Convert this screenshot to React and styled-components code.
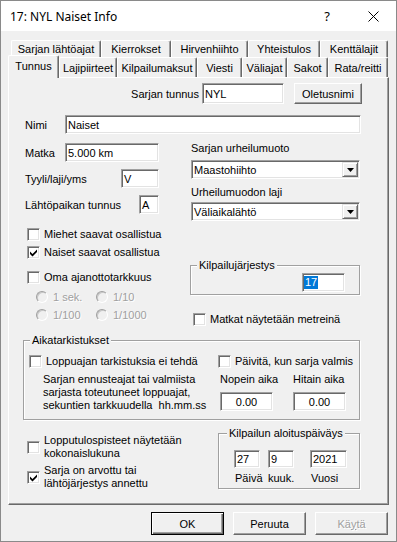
import React from "react";
import styled, { createGlobalStyle, css } from "styled-components";

const GlobalStyle = createGlobalStyle`
  html, body {
    margin: 0;
    padding: 0;
    background: #f0f0f0;
  }
  body {
    font-family: "Liberation Sans", Arial, sans-serif;
    font-size: 11px;
    color: #000;
  }
  * {
    box-sizing: border-box;
  }
`;

const backTabs = [
  { label: "Sarjan lähtöajat", w: 90 },
  { label: "Kierrokset", w: 70 },
  { label: "Hirvenhiihto", w: 77 },
  { label: "Yhteistulos", w: 72 },
  { label: "Kenttälajit", w: 68 },
];

const frontTabs = [
  { label: "Tunnus", w: 51, active: true },
  { label: "Lajipiirteet", w: 58 },
  { label: "Kilpailumaksut", w: 80 },
  { label: "Viesti", w: 45 },
  { label: "Väliajat", w: 45 },
  { label: "Sakot", w: 41 },
  { label: "Rata/reitti", w: 60 },
];

function CheckMark() {
  return (
    <svg width="7" height="8" viewBox="0 0 7 8">
      <polygon points="0,2.4 2.5,4.9 7,0.4 7,3 2.5,7.5 0,5" fill="#000" />
    </svg>
  );
}

function Check({ checked, children, multi }) {
  return (
    <CheckLine $multi={multi}>
      <Box>{checked && <CheckMark />}</Box>
      <span>{children}</span>
    </CheckLine>
  );
}

function Radio({ children }) {
  return (
    <RadioLine>
      <Circle />
      <span>{children}</span>
    </RadioLine>
  );
}

function Dropdown({ value }) {
  return (
    <Select $w={169}>
      <span>{value}</span>
      <DropButton>
        <svg width="7" height="4" viewBox="0 0 7 4">
          <polygon points="0,0 7,0 3.5,4" fill="#000" />
        </svg>
      </DropButton>
    </Select>
  );
}

export default function App() {
  return (
    <>
      <GlobalStyle />
      <Window>
        <TitleBar>
          <Title>17: NYL Naiset Info</Title>
          <CaptionButton>
            <HelpGlyph>?</HelpGlyph>
          </CaptionButton>
          <CaptionButton>
            <svg width="11" height="11" viewBox="0 0 11 11">
              <path d="M0.5 0.5 L10.5 10.5 M10.5 0.5 L0.5 10.5" stroke="#000" strokeWidth="1" />
            </svg>
          </CaptionButton>
        </TitleBar>

        <Body>
          <BackRow>
            {backTabs.map((t) => (
              <BackTab key={t.label} $w={t.w}>
                {t.label}
              </BackTab>
            ))}
          </BackRow>
          <FrontRow>
            {frontTabs.map((t) => (
              <FrontTab key={t.label} $w={t.w} $active={t.active}>
                {t.label}
              </FrontTab>
            ))}
          </FrontRow>

          <Panel>
            <TopRow>
              <Label>Sarjan tunnus</Label>
              <Field $w={82} $h={21}>NYL</Field>
              <Button $w={68} $h={21}>Oletusnimi</Button>
            </TopRow>

            <NameRow>
              <Label $w={40}>Nimi</Label>
              <Field $w={296}>Naiset</Field>
            </NameRow>

            <Columns>
              <LeftCol>
                <FormRow $top={1}>
                  <Label $w={40}>Matka</Label>
                  <Field $w={94}>5.000 km</Field>
                </FormRow>
                <FormRow $top={7}>
                  <Label $grow>Tyyli/laji/yms</Label>
                  <Field $w={38}>V</Field>
                </FormRow>
                <FormRow $top={7}>
                  <Label $grow>Lähtöpaikan tunnus</Label>
                  <Field $w={20}>A</Field>
                </FormRow>
                <CheckStack $top={11}>
                  <Check>Miehet saavat osallistua</Check>
                  <Check checked>Naiset saavat osallistua</Check>
                </CheckStack>
                <CheckStack $top={7}>
                  <Check>Oma ajanottotarkkuus</Check>
                </CheckStack>
                <RadioGrid>
                  <Radio>1 sek.</Radio>
                  <Radio>1/10</Radio>
                  <Radio>1/100</Radio>
                  <Radio>1/1000</Radio>
                </RadioGrid>
              </LeftCol>

              <RightCol>
                <Caption>Sarjan urheilumuoto</Caption>
                <Spaced $top={5}>
                  <Dropdown value="Maastohiihto" />
                </Spaced>
                <Spaced $top={7}>
                  <Caption>Urheilumuodon laji</Caption>
                </Spaced>
                <Spaced $top={3}>
                  <Dropdown value="Väliaikalähtö" />
                </Spaced>
                <OrderGroup $w={170} $h={30}>
                  <Legend>Kilpailujärjestys</Legend>
                  <OrderRow>
                    <Field $w={43}>
                      <Selected>17</Selected>
                    </Field>
                  </OrderRow>
                </OrderGroup>
                <CheckStack $top={15}>
                  <Check>Matkat näytetään metreinä</Check>
                </CheckStack>
              </RightCol>
            </Columns>

            <TimeGroup $w={337} $h={80}>
              <Legend>Aikatarkistukset</Legend>
              <TimeGrid>
                <Indent $left={5}>
                  <Check>Loppuajan tarkistuksia ei tehdä</Check>
                </Indent>
                <Check>Päivitä, kun sarja valmis</Check>
                <Note>
                  Sarjan ennusteajat tai valmiista
                  <br />
                  sarjasta toteutuneet loppuajat,
                  <br />
                  {"sekuntien tarkkuudella\u00a0 hh.mm.ss"}
                </Note>
                <Limits>
                  <LimitCol>
                    <Caption>Nopein aika</Caption>
                    <LimitField $w={53} $center>0.00</LimitField>
                  </LimitCol>
                  <LimitCol>
                    <Caption>Hitain aika</Caption>
                    <LimitField $w={53} $center>0.00</LimitField>
                  </LimitCol>
                </Limits>
              </TimeGrid>
            </TimeGroup>

            <BottomArea>
              <BottomChecks>
                <Check multi>
                  Lopputulospisteet näytetään
                  <br />
                  kokonaislukuna
                </Check>
                <Check multi checked>
                  Sarja on arvottu tai
                  <br />
                  lähtöjärjestys annettu
                </Check>
              </BottomChecks>
              <Group $w={142} $h={56}>
                <Legend $left={8}>Kilpailun aloituspäiväys</Legend>
                <DateGrid>
                  <Field $w={26} $h={18}>27</Field>
                  <Field $w={26} $h={18}>9</Field>
                  <Field $w={37} $h={18}>2021</Field>
                  <DateLabel $left={1}>Päivä</DateLabel>
                  <DateLabel>kuuk.</DateLabel>
                  <DateLabel $left={1}>Vuosi</DateLabel>
                </DateGrid>
              </Group>
            </BottomArea>
          </Panel>

          <ButtonRow>
            <Button $w={73} $h={23} $default>OK</Button>
            <Button $w={73} $h={23}>Peruuta</Button>
            <Button $w={73} $h={23} $disabled>
              Kä<u>y</u>tä
            </Button>
          </ButtonRow>
        </Body>
      </Window>
    </>
  );
}

const Window = styled.div`
  width: 397px;
  height: 542px;
  border: 1px solid #8a8a8a;
  background: #f0f0f0;
  display: flex;
  flex-direction: column;
  overflow: hidden;
`;

const TitleBar = styled.div`
  height: 30px;
  background: #fff;
  display: flex;
  align-items: center;
  flex-shrink: 0;
`;

const Title = styled.div`
  flex: 1;
  padding-left: 9px;
  font-family: "Segoe UI", "Noto Sans", "Open Sans", sans-serif;
  font-size: 12px;
  color: #000;
`;

const CaptionButton = styled.div`
  width: 46px;
  height: 30px;
  display: flex;
  align-items: center;
  justify-content: center;
`;

const HelpGlyph = styled.span`
  font-family: "Noto Sans", "Open Sans", sans-serif;
  font-size: 13px;
  line-height: 1;
`;

const Body = styled.div`
  padding: 9px 0 0 7px;
`;

const tabEdge = css`
  border-top: 1px solid #fff;
  border-left: 1px solid #fff;
  border-right: 1px solid #696969;
  box-shadow: inset -1px 0 0 #a0a0a0;
  border-radius: 2px 2px 0 0;
  background: #f0f0f0;
  display: flex;
  align-items: center;
  justify-content: center;
  white-space: nowrap;
  flex-shrink: 0;
`;

const BackRow = styled.div`
  display: flex;
  height: 17px;
  padding-left: 3px;
`;

const BackTab = styled.div`
  ${tabEdge}
  width: ${(p) => p.$w}px;
  height: 17px;
`;

const FrontRow = styled.div`
  display: flex;
  align-items: flex-end;
  height: 20px;
`;

const FrontTab = styled.div`
  ${tabEdge}
  width: ${(p) => p.$w}px;
  height: 20px;
  ${(p) =>
    p.$active &&
    css`
      height: 23px;
      margin-bottom: -1px;
      padding-bottom: 2px;
      position: relative;
      z-index: 1;
    `}
`;

const Panel = styled.div`
  width: 381px;
  height: 428px;
  border-top: 1px solid #fff;
  border-left: 1px solid #fff;
  border-right: 1px solid #696969;
  border-bottom: 1px solid #696969;
  box-shadow: inset -1px -1px 0 #a0a0a0;
  display: flex;
  flex-direction: column;
`;

const Label = styled.span`
  white-space: nowrap;
  ${(p) => p.$w && `width: ${p.$w}px; flex-shrink: 0;`}
  ${(p) => p.$grow && "flex: 1;"}
`;

const Field = styled.div`
  width: ${(p) => p.$w}px;
  height: ${(p) => p.$h || 19}px;
  flex-shrink: 0;
  background: #fff;
  border: 1px solid;
  border-color: #a0a0a0 #fff #fff #a0a0a0;
  box-shadow: inset 1px 1px 0 #696969, inset -1px -1px 0 #e3e3e3;
  padding: 0 2px;
  display: flex;
  align-items: center;
  justify-content: ${(p) => (p.$center ? "center" : "flex-start")};
  white-space: nowrap;
  overflow: hidden;
`;

const Select = styled(Field)`
  justify-content: space-between;
  padding: 0 2px 0 2px;
`;

const DropButton = styled.div`
  width: 16px;
  height: 15px;
  border-top: 1px solid #e3e3e3;
  border-left: 1px solid #e3e3e3;
  border-right: 1px solid #696969;
  border-bottom: 1px solid #696969;
  box-shadow: inset 1px 1px 0 #fff, inset -1px -1px 0 #a0a0a0;
  background: #f0f0f0;
  display: flex;
  align-items: center;
  justify-content: center;
  margin-right: -1px;
`;

const Button = styled.div`
  width: ${(p) => p.$w}px;
  height: ${(p) => p.$h}px;
  flex-shrink: 0;
  background: #f0f0f0;
  border-top: 1px solid #fff;
  border-left: 1px solid #fff;
  border-right: 1px solid #696969;
  border-bottom: 1px solid #696969;
  box-shadow: inset -1px -1px 0 #a0a0a0;
  display: flex;
  align-items: center;
  justify-content: center;
  white-space: nowrap;
  ${(p) =>
    p.$default &&
    css`
      border: 1px solid #000;
      box-shadow: inset 1px 1px 0 #fff, inset -1px -1px 0 #696969, inset -2px -2px 0 #a0a0a0;
    `}
  ${(p) =>
    p.$disabled &&
    css`
      color: #a0a0a0;
      text-shadow: 1px 1px 0 #fff;
    `}
`;

const TopRow = styled.div`
  margin-top: 5px;
  display: flex;
  justify-content: flex-end;
  align-items: center;
  padding-right: 26px;

  ${Label} {
    margin-right: 3px;
  }
  ${Field} {
    margin-right: 10px;
  }
`;

const NameRow = styled.div`
  margin-top: 11px;
  display: flex;
  align-items: center;
  padding-left: 16px;
`;

const Columns = styled.div`
  margin-top: 8px;
  padding-left: 16px;
  display: grid;
  grid-template-columns: 134px 170px;
  column-gap: 32px;
  align-items: start;
`;

const LeftCol = styled.div`
  display: flex;
  flex-direction: column;
`;

const RightCol = styled.div`
  display: flex;
  flex-direction: column;
`;

const FormRow = styled.div`
  margin-top: ${(p) => p.$top}px;
  display: flex;
  align-items: center;
`;

const CheckStack = styled.div`
  margin-top: ${(p) => p.$top}px;
  padding-left: 2px;
  display: flex;
  flex-direction: column;
`;

const CheckLine = styled.div`
  display: flex;
  align-items: center;
  gap: 4px;
  white-space: nowrap;
  height: ${(p) => (p.$multi ? "auto" : "18px")};
  line-height: 13px;
`;

const Box = styled.div`
  width: 13px;
  height: 13px;
  flex-shrink: 0;
  background: #fff;
  border: 1px solid;
  border-color: #a0a0a0 #fff #fff #a0a0a0;
  box-shadow: inset 1px 1px 0 #696969, inset -1px -1px 0 #e3e3e3;
  display: flex;
  align-items: center;
  justify-content: center;
  padding-top: 1px;
`;

const RadioGrid = styled.div`
  margin-top: 2px;
  padding-left: 11px;
  display: grid;
  grid-template-columns: 60px auto;
  grid-auto-rows: 18px;
`;

const RadioLine = styled.div`
  display: flex;
  align-items: center;
  gap: 5px;
  color: #a0a0a0;
  text-shadow: 1px 1px 0 #fff;
  white-space: nowrap;
`;

const Circle = styled.div`
  width: 12px;
  height: 12px;
  border-radius: 50%;
  border: 1px solid;
  border-color: #a0a0a0 #fff #fff #a0a0a0;
  box-shadow: inset 1px 1px 0 #c8c8c8;
  background: #f0f0f0;
  flex-shrink: 0;
`;

const Caption = styled.div`
  line-height: 13px;
  white-space: nowrap;
`;

const Spaced = styled.div`
  margin-top: ${(p) => p.$top}px;
`;

const Group = styled.div`
  width: ${(p) => p.$w}px;
  height: ${(p) => p.$h}px;
  flex-shrink: 0;
  border: 1px solid #a0a0a0;
  box-shadow: inset 1px 1px 0 #fff, 1px 1px 0 #fff;
  display: flex;
  flex-direction: column;
`;

const Legend = styled.div`
  align-self: flex-start;
  margin: -7px 0 0 ${(p) => p.$left || 6}px;
  padding: 0 2px;
  height: 13px;
  line-height: 13px;
  background: #f0f0f0;
  white-space: nowrap;
`;

const OrderGroup = styled(Group)`
  margin-top: 44px;
  margin-left: -1px;
`;

const OrderRow = styled.div`
  margin-top: 1px;
  display: flex;
  justify-content: flex-end;
  padding-right: 14px;
`;

const Selected = styled.span`
  background: #0078d7;
  color: #fff;
  line-height: 13px;
  padding: 0 1px;
  margin-left: -1px;
`;

const TimeGroup = styled(Group)`
  margin-top: 12px;
  margin-left: 14px;
`;

const TimeGrid = styled.div`
  margin-top: 5px;
  display: grid;
  grid-template-columns: 194px 1fr;
  grid-template-rows: 18px auto;
  row-gap: 3px;
`;

const Indent = styled.div`
  padding-left: ${(p) => p.$left}px;
`;

const Note = styled.div`
  padding-left: 19px;
  line-height: 13px;
  white-space: nowrap;
`;

const Limits = styled.div`
  padding-left: 2px;
  display: flex;
  gap: 20px;
`;

const LimitCol = styled.div`
  width: 53px;
  display: flex;
  flex-direction: column;
`;

const LimitField = styled(Field)`
  margin-top: 6px;
`;

const BottomArea = styled.div`
  margin-top: 13px;
  display: flex;
`;

const BottomChecks = styled.div`
  margin-left: 18px;
  width: 191px;
  padding-top: 1px;
  display: flex;
  flex-direction: column;
  gap: 4px;
`;

const DateGrid = styled.div`
  margin-top: 10px;
  padding-left: 15px;
  display: grid;
  grid-template-columns: 34px 42px 37px;
  row-gap: 4px;
`;

const DateLabel = styled.div`
  line-height: 13px;
  padding-left: ${(p) => p.$left || 0}px;
  white-space: nowrap;
`;

const ButtonRow = styled.div`
  width: 381px;
  margin-top: 7px;
  padding-right: 1px;
  display: flex;
  justify-content: flex-end;
  gap: 9px;
`;
